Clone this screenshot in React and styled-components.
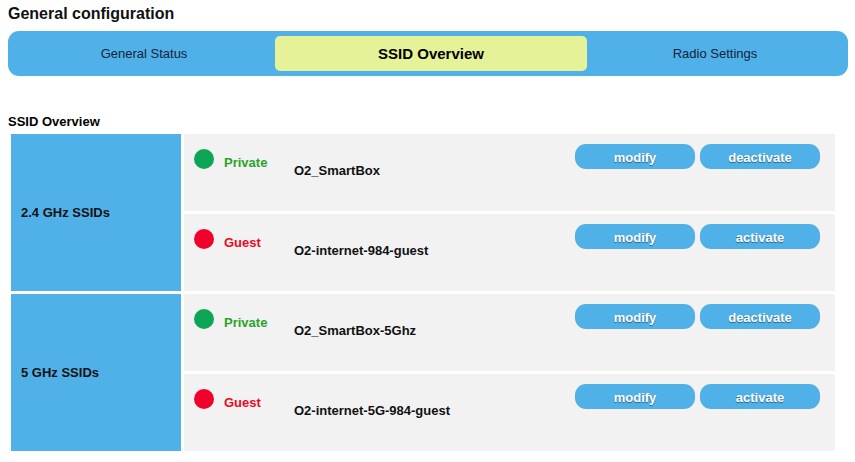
import React from 'react';
import styled, { createGlobalStyle } from 'styled-components';

const GlobalStyle = createGlobalStyle`
  body {
    margin: 0;
    background: #ffffff;
    font-family: "Liberation Sans", Arial, Helvetica, sans-serif;
    color: #000;
  }
`;

const Page = styled.div`
  padding: 5px 8px 0 8px;
`;

const Title = styled.h1`
  margin: 0;
  font-size: 16px;
  line-height: 18px;
  font-weight: bold;
  color: #111;
`;

const TabBar = styled.div`
  margin-top: 8px;
  width: 840px;
  box-sizing: border-box;
  padding: 5px;
  background: #50b1e8;
  border-radius: 11px;
  display: grid;
  grid-template-columns: 262px 312px 1fr;
  height: 45px;
`;

const Tab = styled.div`
  display: flex;
  align-items: center;
  justify-content: center;
  border-radius: 5px;
  font-size: ${p => (p.$active ? '15px' : '13px')};
  font-weight: ${p => (p.$active ? 'bold' : 'normal')};
  color: ${p => (p.$active ? '#000' : '#14233a')};
  background: ${p => (p.$active ? '#e6f297' : 'transparent')};
  padding-bottom: 1px;
`;

const SectionLabel = styled.h2`
  margin: 38px 0 2px 0;
  font-size: 13px;
  line-height: 15px;
  font-weight: bold;
`;

const Table = styled.table`
  border-spacing: 3px;
  border-collapse: separate;
  width: 830px;
`;

const BandCell = styled.td`
  width: 170px;
  background: #50b1e8;
  padding: 0 0 0 10px;
  box-sizing: border-box;
  font-size: 13px;
  font-weight: bold;
  color: #111;
  vertical-align: middle;
`;

const SsidCell = styled.td`
  padding: 0;
  background: #f2f2f2;
  height: 77px;
  vertical-align: top;
`;

const Row = styled.div`
  display: flex;
  align-items: flex-start;
  height: 77px;
  padding: 0 15px 0 10px;
`;

const Dot = styled.span`
  width: 20px;
  height: 20px;
  border-radius: 50%;
  margin-top: 15px;
  flex: none;
  background: ${p => (p.$on ? '#0da657' : '#f1002b')};
`;

const Kind = styled.span`
  width: 70px;
  margin: 21px 0 0 10px;
  font-size: 13px;
  line-height: 15px;
  font-weight: bold;
  color: ${p => (p.$on ? '#2aa329' : '#ea0a1c')};
`;

const Name = styled.span`
  margin-top: 29px;
  flex: 1;
  font-size: 13px;
  line-height: 15px;
  font-weight: bold;
  color: #111;
`;

const Actions = styled.div`
  display: flex;
  gap: 5px;
  margin-top: 10px;
`;

const Button = styled.button`
  width: 120px;
  height: 25px;
  border: none;
  border-radius: 11px;
  background: #50b1e8;
  color: #fff;
  font-family: "Liberation Sans", Arial, Helvetica, sans-serif;
  font-size: 13px;
  font-weight: bold;
  text-shadow: 0 1px 1px rgba(0, 0, 0, 0.45);
  padding: 1px 0 0 0;
  cursor: pointer;
`;

const bands = [
  {
    label: '2.4 GHz SSIDs',
    ssids: [
      { kind: 'Private', name: 'O2_SmartBox', on: true },
      { kind: 'Guest', name: 'O2-internet-984-guest', on: false },
    ],
  },
  {
    label: '5 GHz SSIDs',
    ssids: [
      { kind: 'Private', name: 'O2_SmartBox-5Ghz', on: true },
      { kind: 'Guest', name: 'O2-internet-5G-984-guest', on: false },
    ],
  },
];

const SsidRow = ({ ssid }) => (
  <Row>
    <Dot $on={ssid.on} />
    <Kind $on={ssid.on}>{ssid.kind}</Kind>
    <Name>{ssid.name}</Name>
    <Actions>
      <Button>modify</Button>
      <Button>{ssid.on ? 'deactivate' : 'activate'}</Button>
    </Actions>
  </Row>
);

const App = () => {
  return (
    <Page>
      <GlobalStyle />
      <Title>General configuration</Title>
      <TabBar>
        <Tab>General Status</Tab>
        <Tab $active>SSID Overview</Tab>
        <Tab>Radio Settings</Tab>
      </TabBar>

      <SectionLabel>SSID Overview</SectionLabel>
      <Table>
        <tbody>
          {bands.map(band =>
            band.ssids.map((ssid, i) => (
              <tr key={band.label + i}>
                {i === 0 && <BandCell rowSpan={band.ssids.length}>{band.label}</BandCell>}
                <SsidCell>
                  <SsidRow ssid={ssid} />
                </SsidCell>
              </tr>
            ))
          )}
        </tbody>
      </Table>
    </Page>
  );
};

export default App;
